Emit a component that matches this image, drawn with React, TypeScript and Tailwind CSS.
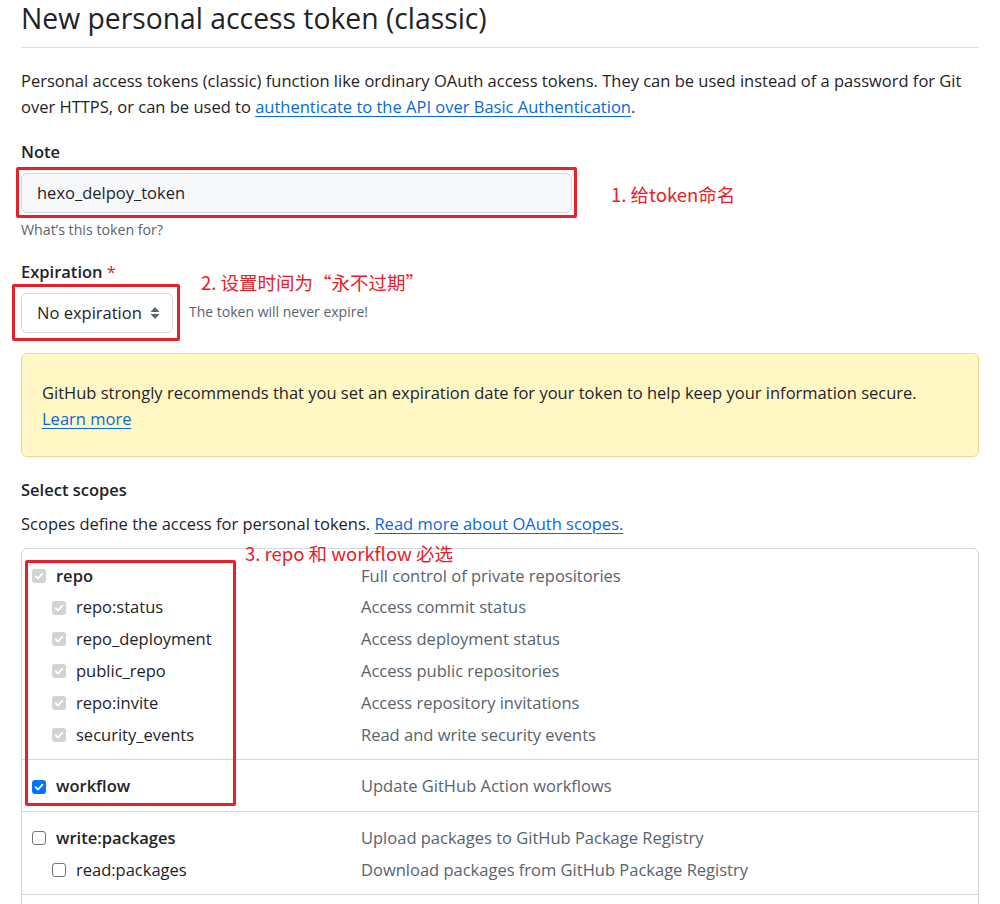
const font = "font-['Segoe_UI','Open_Sans','Noto_Sans_CJK_SC',sans-serif]";
const cjk = "font-['Noto_Sans_CJK_SC',sans-serif]";

type Scope = { name: string; desc: string; sub?: boolean; state: 'disabled' | 'checked' | 'empty'; bold?: boolean };

const groups: Scope[][] = [
  [
    { name: 'repo', desc: 'Full control of private repositories', state: 'disabled', bold: true },
    { name: 'repo:status', desc: 'Access commit status', state: 'disabled', sub: true },
    { name: 'repo_deployment', desc: 'Access deployment status', state: 'disabled', sub: true },
    { name: 'public_repo', desc: 'Access public repositories', state: 'disabled', sub: true },
    { name: 'repo:invite', desc: 'Access repository invitations', state: 'disabled', sub: true },
    { name: 'security_events', desc: 'Read and write security events', state: 'disabled', sub: true },
  ],
  [{ name: 'workflow', desc: 'Update GitHub Action workflows', state: 'checked', bold: true }],
  [
    { name: 'write:packages', desc: 'Upload packages to GitHub Package Registry', state: 'empty', bold: true },
    { name: 'read:packages', desc: 'Download packages from GitHub Package Registry', state: 'empty', sub: true },
  ],
];

const Check = ({ state }: { state: Scope['state'] }) => {
  if (state === 'empty') {
    return <span className="w-[14px] h-[14px] rounded-[3px] border border-[#767676] bg-white shrink-0" />;
  }
  const bg = state === 'checked' ? 'bg-[#0075ff]' : 'bg-[#d3d3d3]';
  return (
    <span className={`w-[14px] h-[14px] rounded-[3px] ${bg} flex items-center justify-center shrink-0`}>
      <svg width="10" height="10" viewBox="0 0 10 10" fill="none">
        <path d="M1.6 5.2 L4 7.5 L8.4 2.6" stroke="white" strokeWidth="1.8" strokeLinecap="round" strokeLinejoin="round" />
      </svg>
    </span>
  );
};

const RedBox = ({ className }: { className: string }) => (
  <div className={`absolute border-[3px] border-[#e8202a] rounded-[2px] pointer-events-none ${className}`} />
);

export default function App() {
  return (
    <div className={`${font} w-[1000px] h-[904px] overflow-hidden bg-white text-[#1f2328] px-[21px]`}>
      {/* Title */}
      <div className="border-b border-[#d8dee4] h-[48px] pt-[1px]">
        <h1 className="text-[28.3px] leading-[34px]">New personal access token (classic)</h1>
      </div>

      <p className="mt-[20px] text-[16.5px] leading-[26px]">
        Personal access tokens (classic) function like ordinary OAuth access tokens. They can be used instead of a password for Git over HTTPS, or can be used to{' '}
        <a className="text-[#0969da] underline underline-offset-[3px]">authenticate to the API over Basic Authentication</a>.
      </p>

      {/* Note */}
      <div className="mt-[20px] text-[16.5px] font-semibold leading-[24px]">Note</div>
      <div className="mt-[9px] flex items-center">
        <div className="relative w-[551px]">
          <div className="h-[40px] rounded-[6px] border border-[#d1d9e0] bg-[#f6f8fa] flex items-center px-[15px] text-[16.5px]">
            hexo_delpoy_token
          </div>
          <RedBox className="-left-[5px] -right-[5px] -top-[6px] -bottom-[5px]" />
        </div>
        <span className={`${cjk} ml-[39px] mt-[4px] text-[18.5px] text-[#e8202a]`}>1. 给token命名</span>
      </div>
      <div className="mt-[7px] text-[14.2px] text-[#59636e] leading-[20px]">What’s this token for?</div>

      {/* Expiration */}
      <div className="relative mt-[20px] text-[16.5px] font-semibold leading-[24px]">
        Expiration <span className="text-[#d1242f] font-normal">*</span>
        <span className={`${cjk} absolute left-[180px] top-[10px] font-normal text-[18.5px] text-[#e8202a]`}>2. 设置时间为“永不过期”</span>
      </div>
      <div className="mt-[9px] flex items-center">
        <div className="relative">
          <div className="h-[40px] w-[152px] rounded-[6px] border border-[#d1d9e0] bg-white flex items-center justify-between pl-[15px] pr-[12px] text-[16.5px]">
            No expiration
            <svg width="10" height="16" viewBox="0 0 10 16" fill="#59636e">
              <path d="M5 2 L9.5 7 H0.5 Z" />
              <path d="M5 14 L9.5 9 H0.5 Z" />
            </svg>
          </div>
          <RedBox className="-left-[9px] -right-[7px] -top-[9px] -bottom-[8px]" />
        </div>
        <span className="ml-[16px] text-[14px] text-[#59636e] -mt-[4px]">The token will never expire!</span>
      </div>

      {/* Warning */}
      <div className="mt-[20px] rounded-[6px] border border-[#ecd98a] bg-[#fff8c5] h-[104px] px-[20px] pt-[26px] text-[16.5px] leading-[26px]">
        <div>GitHub strongly recommends that you set an expiration date for your token to help keep your information secure.</div>
        <a className="text-[#0969da] underline underline-offset-[3px]">Learn more</a>
      </div>

      {/* Scopes */}
      <div className="mt-[21px] text-[16.5px] font-semibold leading-[24px]">Select scopes</div>
      <p className="mt-[10px] text-[16.5px] leading-[24px]">
        Scopes define the access for personal tokens.{' '}
        <a className="text-[#0969da] underline underline-offset-[3px]">Read more about OAuth scopes.</a>
      </p>

      <div className="relative mt-[12px] rounded-t-[6px] border border-[#d1d9e0]">
        {groups.map((g, gi) => (
          <div
            key={gi}
            className={`${gi === 0 ? 'pt-[11px]' : 'pt-[11px] border-t border-[#d1d9e0]'} pb-[8px]`}
          >
            {g.map((s) => (
              <div key={s.name} className="flex items-center h-[31.8px] text-[16.5px]">
                <div className={`w-[339px] flex items-center gap-[10px] ${s.sub ? 'pl-[30px]' : 'pl-[10px]'}`}>
                  <Check state={s.state} />
                  <span className={s.bold ? 'font-semibold' : ''}>{s.name}</span>
                </div>
                <span className="text-[#59636e]">{s.desc}</span>
              </div>
            ))}
          </div>
        ))}
        <div className="h-[20px] border-t border-[#d1d9e0]" />
        <RedBox className="left-[3px] w-[211px] top-[11px] h-[246px]" />
        <span className={`${cjk} absolute left-[223px] -top-[8px] text-[18.5px] leading-[24px] text-[#e8202a]`}>
          3. repo 和 workflow 必选
        </span>
      </div>
    </div>
  );
}
